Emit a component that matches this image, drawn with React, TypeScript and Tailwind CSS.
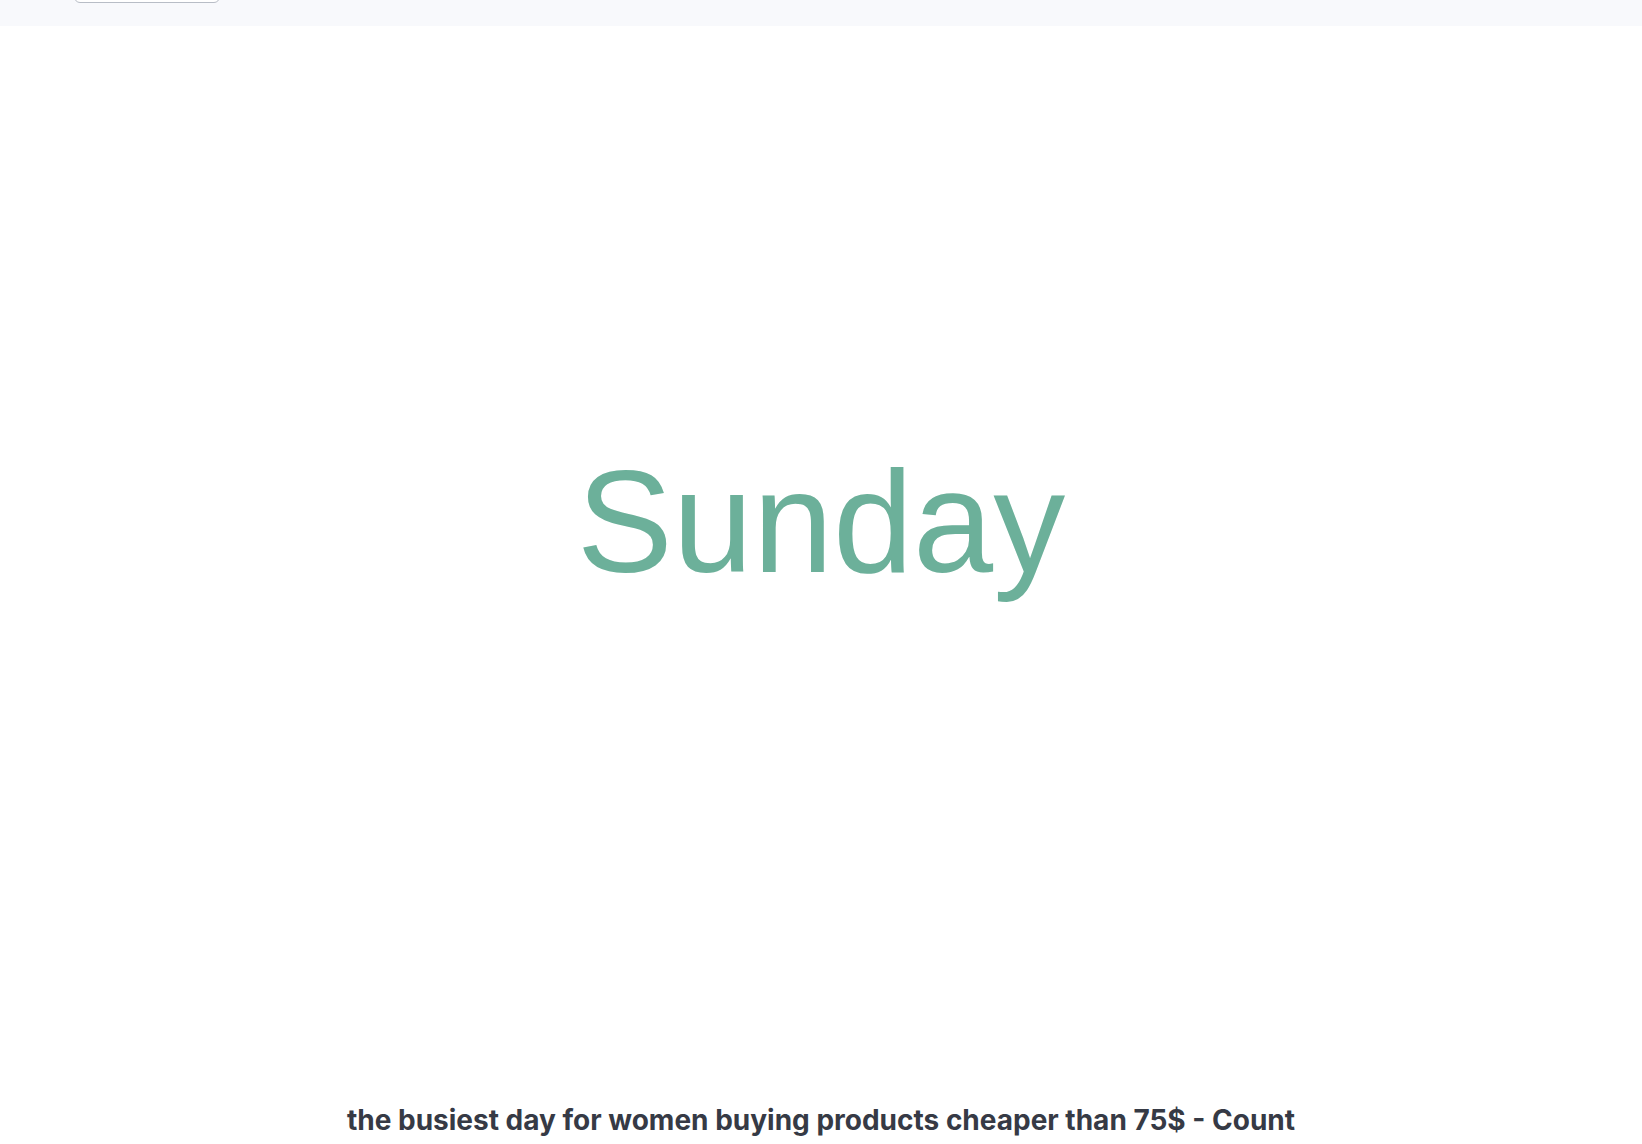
export default function App() {
    return <>
    <div className="min-h-screen bg-white flex flex-col overflow-hidden">
        <div className="h-[26px] bg-[#f8f9fc] flex items-start pl-[74px] shrink-0">
            <button className="w-[146px] h-[34px] -mt-[31px] border border-[#b8bdc6] rounded-md bg-white"></button>
        </div>

        <div className="h-[994px] flex items-center justify-center shrink-0">
            <div className="text-[144px] leading-none text-[#6cb09a]" style={{ fontFamily: '"Liberation Sans", Arial, sans-serif' }}>
                Sunday
            </div>
        </div>

        <div className="pt-[84px] text-center">
            <h2 className="text-[28px] leading-[32px] font-bold text-[#363a45]" style={{ fontFamily: 'Inter, "Noto Sans", sans-serif' }}>
                the busiest day for women buying products cheaper than 75$ - Count
            </h2>
        </div>
    </div>
    </>
}
